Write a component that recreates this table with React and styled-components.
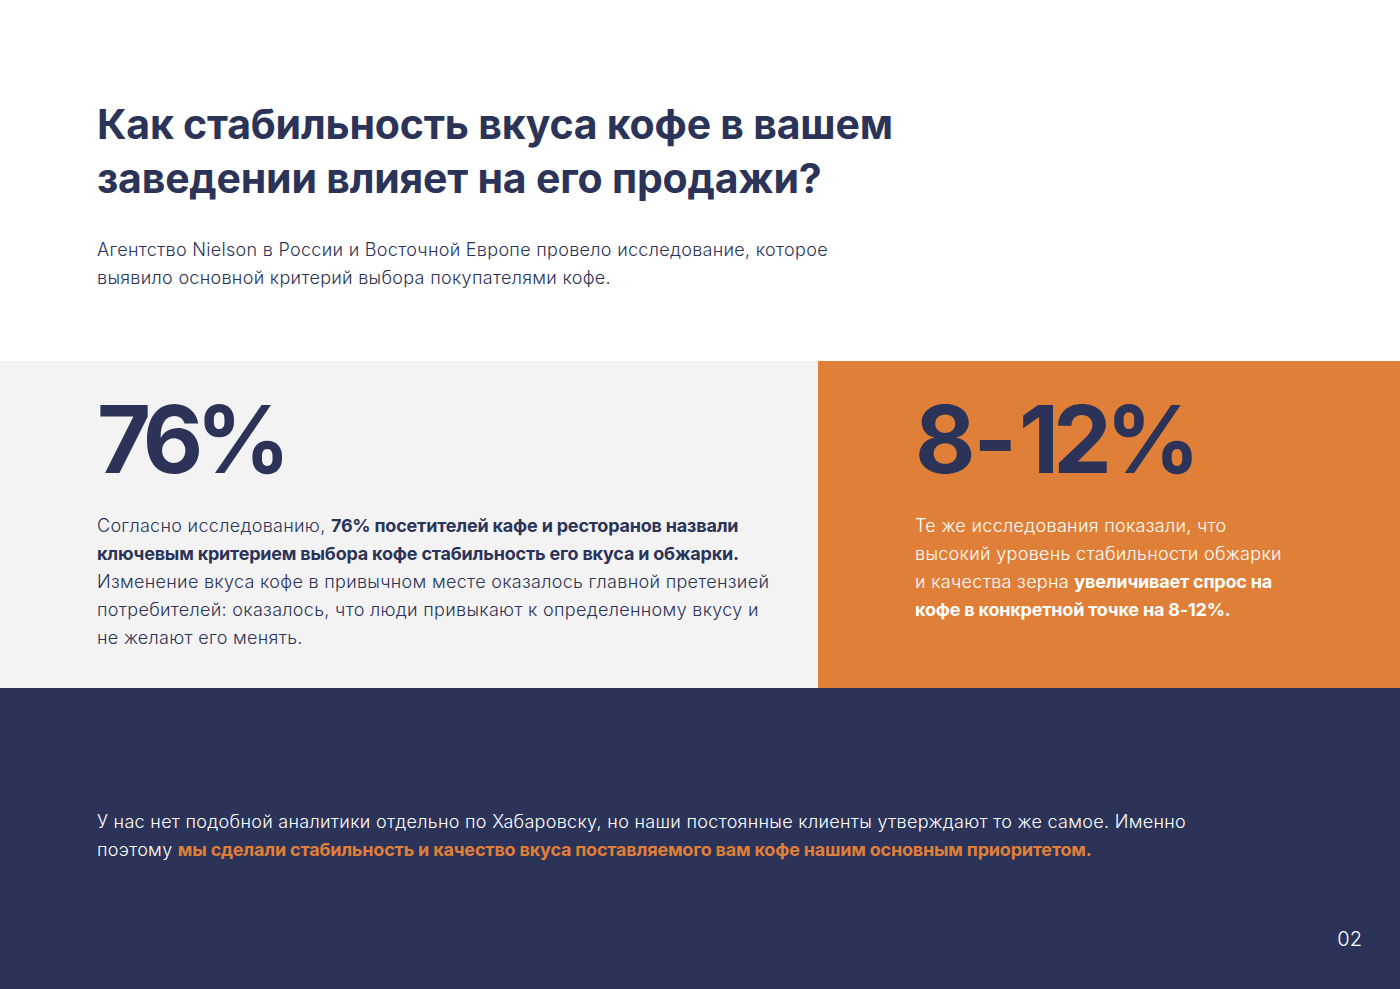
import React from 'react';
import styled, { createGlobalStyle } from 'styled-components';

const navy = '#2b3358';
const orange = '#e07f38';

const GlobalStyle = createGlobalStyle`
    *, *::before, *::after {
        box-sizing: border-box;
    }
    body {
        margin: 0;
        font-family: Inter, "Noto Sans", sans-serif;
        background: #fff;
    }
`;

const Page = styled.div`
    width: 1400px;
    height: 989px;
    display: flex;
    flex-direction: column;
`;

const Intro = styled.section`
    padding: 97px 97px 69px;
    background: #fff;
`;

const Title = styled.h1`
    margin: 0;
    color: ${navy};
    font-size: 41px;
    line-height: 54px;
    font-weight: 700;
    letter-spacing: -0.2px;
`;

const Body = styled.p`
    margin: 0;
    font-size: 18px;
    line-height: 28px;
    font-weight: 300;
    letter-spacing: 0.3px;
    white-space: nowrap;
`;

const Lead = styled(Body)`
    margin-top: 31px;
    color: ${navy};
`;

const StatsRow = styled.section`
    display: flex;
    height: 327px;
`;

const StatCard = styled.div`
    flex: ${props => props.$flex};
    min-width: 0;
    background: ${props => props.$bg};
    padding: 30px 97px 0;
`;

const BigNumber = styled.div`
    color: ${navy};
    font-size: 93px;
    line-height: 96px;
    font-weight: 700;
    letter-spacing: ${props => props.$spacing};
    white-space: nowrap;
`;

const Dash = styled.span`
    display: inline-block;
    margin: 0 8px 0 4px;
`;

const StatText = styled(Body)`
    margin-top: 25px;
    color: ${props => props.$color};

    b {
        font-weight: 700;
        letter-spacing: -0.2px;
    }
`;

const Footer = styled.section`
    flex: 1;
    background: ${navy};
    padding: 120px 38px 38px 97px;
    display: flex;
    flex-direction: column;
    justify-content: space-between;
`;

const FooterText = styled(Body)`
    color: #fff;

    b {
        color: ${orange};
        font-weight: 700;
        letter-spacing: -0.2px;
    }
`;

const PageNumber = styled.div`
    align-self: flex-end;
    color: #fff;
    font-size: 20px;
    font-weight: 300;
`;

const App = () => (
    <Page>
        <GlobalStyle />
        <Intro>
            <Title>
                Как стабильность вкуса кофе в вашем<br />
                заведении влияет на его продажи?
            </Title>
            <Lead>
                Агентство Nielson в России и Восточной Европе провело исследование, которое<br />
                выявило основной критерий выбора покупателями кофе.
            </Lead>
        </Intro>
        <StatsRow>
            <StatCard $flex="0 0 818px" $bg="#f3f3f3">
                <BigNumber $spacing="-7px">76%</BigNumber>
                <StatText $color={navy}>
                    Согласно исследованию, <b>76% посетителей кафе и ресторанов назвали<br />
                    ключевым критерием выбора кофе стабильность его вкуса и обжарки.</b><br />
                    Изменение вкуса кофе в привычном месте оказалось главной претензией<br />
                    потребителей: оказалось, что люди привыкают к определенному вкусу и<br />
                    не желают его менять.
                </StatText>
            </StatCard>
            <StatCard $flex="1 1 auto" $bg={orange}>
                <BigNumber $spacing="-6px">8<Dash>-</Dash>12%</BigNumber>
                <StatText $color="#fff">
                    Те же исследования показали, что<br />
                    высокий уровень стабильности обжарки<br />
                    и качества зерна <b>увеличивает спрос на<br />
                    кофе в конкретной точке на 8-12%.</b>
                </StatText>
            </StatCard>
        </StatsRow>
        <Footer>
            <FooterText>
                У нас нет подобной аналитики отдельно по Хабаровску, но наши постоянные клиенты утверждают то же самое. Именно<br />
                поэтому <b>мы сделали стабильность и качество вкуса поставляемого вам кофе нашим основным приоритетом.</b>
            </FooterText>
            <PageNumber>02</PageNumber>
        </Footer>
    </Page>
);

export default App;
